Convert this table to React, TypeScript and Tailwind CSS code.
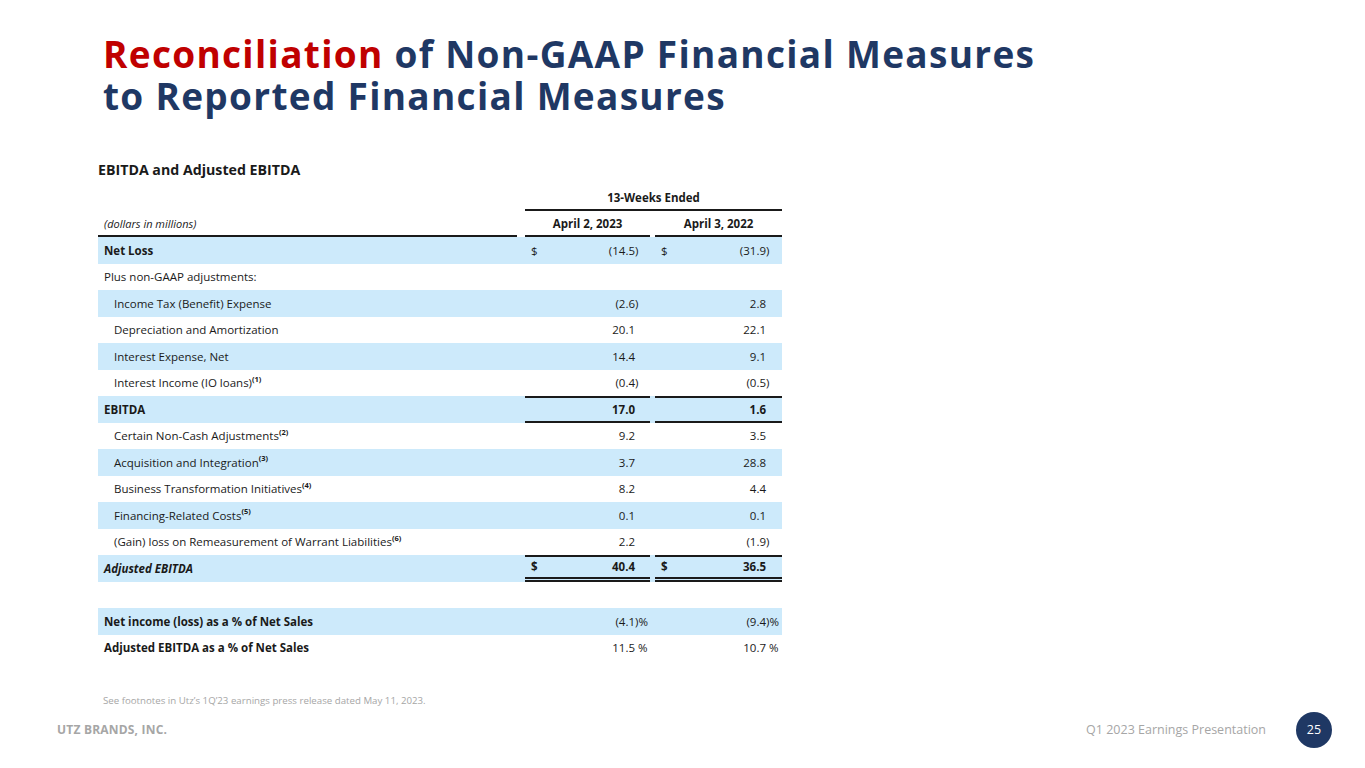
import React from 'react';

type Row = {
  label: string;
  sup?: string;
  indent?: boolean;
  bold?: boolean;
  italic?: boolean;
  band?: boolean;
  dollar?: boolean;
  a?: string;
  aSuf?: string;
  b?: string;
  bSuf?: string;
  valBold?: boolean;
  topLine?: boolean;
  bottomLine?: 'single' | 'double';
};

const rows: Row[] = [
  { label: 'Net Loss', bold: true, band: true, dollar: true, a: '(14.5', aSuf: ')', b: '(31.9', bSuf: ')' },
  { label: 'Plus non-GAAP adjustments:' },
  { label: 'Income Tax (Benefit) Expense', indent: true, band: true, a: '(2.6', aSuf: ')', b: '2.8' },
  { label: 'Depreciation and Amortization', indent: true, a: '20.1', b: '22.1' },
  { label: 'Interest Expense, Net', indent: true, band: true, a: '14.4', b: '9.1' },
  { label: 'Interest Income (IO loans)', sup: '(1)', indent: true, a: '(0.4', aSuf: ')', b: '(0.5', bSuf: ')' },
  { label: 'EBITDA', bold: true, band: true, a: '17.0', b: '1.6', valBold: true, topLine: true, bottomLine: 'single' },
  { label: 'Certain Non-Cash Adjustments', sup: '(2)', indent: true, a: '9.2', b: '3.5' },
  { label: 'Acquisition and Integration', sup: '(3)', indent: true, band: true, a: '3.7', b: '28.8' },
  { label: 'Business Transformation Initiatives', sup: '(4)', indent: true, a: '8.2', b: '4.4' },
  { label: 'Financing-Related Costs', sup: '(5)', indent: true, band: true, a: '0.1', b: '0.1' },
  { label: '(Gain) loss on Remeasurement of Warrant Liabilities', sup: '(6)', indent: true, a: '2.2', b: '(1.9', bSuf: ')' },
  { label: 'Adjusted EBITDA', bold: true, italic: true, band: true, dollar: true, a: '40.4', b: '36.5', valBold: true, topLine: true, bottomLine: 'double' },
  { label: '' },
  { label: 'Net income (loss) as a % of Net Sales', bold: true, band: true, a: '(4.1', aSuf: ')%', b: '(9.4', bSuf: ')%' },
  { label: 'Adjusted EBITDA as a % of Net Sales', bold: true, a: '11.5', aSuf: '\u00a0%', b: '10.7', bSuf: '\u00a0%' },
];

const ValueCell: React.FC<{ row: Row; val?: string; suf?: string; width: string; pr: string }> = ({ row, val, suf, width, pr }) => {
  const lines = [
    row.topLine ? 'border-t-2 border-[#1a1a1a]' : '',
    row.bottomLine === 'single' ? 'border-b-2 border-[#1a1a1a]' : '',
    row.bottomLine === 'double' ? 'border-b-[5px] border-double border-[#1a1a1a] -mb-[5px]' : '',
  ].join(' ');
  return (
    <div className={`${width} ${pr} h-full flex items-center pl-[6px] ${lines} ${row.valBold ? 'font-bold' : ''}`}>
      <span className="flex-1">{row.dollar ? '$' : ''}</span>
      <span>{val}</span>
      <span className="w-[14px] text-left whitespace-pre">{suf ?? ''}</span>
    </div>
  );
};

const App: React.FC = () => {
  return (
    <div className="w-[1365px] h-[768px] bg-white flex flex-col relative overflow-hidden" style={{ fontFamily: '"Open Sans", sans-serif' }}>
      <h1 className="pl-[103px] pt-[33px] text-[37px] leading-[42px] tracking-[1.3px] font-bold text-[#1f3864]">
        <span className="text-[#c00000]">Reconciliation</span> of Non-GAAP Financial Measures
        <br />
        to Reported Financial Measures
      </h1>

      <div className="ml-[98px] w-[684px] mt-[43px] text-[#1a1a1a] text-[11.5px]">
        <div className="h-[20px] flex items-center text-[14.2px] font-bold">EBITDA and Adjusted EBITDA</div>

        <div className="mt-[7px] h-[24px] flex">
          <div className="flex-1" />
          <div className="w-[257px] flex items-center justify-center font-bold border-b-2 border-[#1a1a1a]">13-Weeks Ended</div>
        </div>

        <div className="h-[26px] flex">
          <div className="w-[419px] flex items-center pl-[6px] pt-[2px] text-[11px] italic border-b-2 border-[#1a1a1a]">(dollars in millions)</div>
          <div className="w-[8px]" />
          <div className="w-[125px] flex items-center justify-center pt-[2px] font-bold border-b-2 border-[#1a1a1a]">April 2, 2023</div>
          <div className="w-[5px]" />
          <div className="w-[127px] flex items-center justify-center pt-[2px] font-bold border-b-2 border-[#1a1a1a]">April 3, 2022</div>
        </div>

        {rows.map((row, i) => (
          <div key={i} className={`h-[26.5px] flex ${row.band ? 'bg-[#cdeafb]' : ''}`}>
            <div
              className={`w-[419px] flex items-center ${row.indent ? 'pl-[16px]' : 'pl-[6px]'} ${row.bold ? 'font-bold' : ''} ${row.italic ? 'italic' : ''}`}
            >
              {row.label}
              {row.sup && <sup className="text-[7.5px] font-bold -top-[4px]">{row.sup}</sup>}
            </div>
            <div className="w-[8px]" />
            {row.a !== undefined ? (
              <>
                <ValueCell row={row} val={row.a} suf={row.aSuf} width="w-[125px]" pr="pr-[1px]" />
                <div className="w-[5px]" />
                <ValueCell row={row} val={row.b} suf={row.bSuf} width="w-[127px]" pr="pr-[2px]" />
              </>
            ) : null}
          </div>
        ))}
      </div>

      <p className="pl-[103px] mt-[33px] text-[9.7px] text-[#a6a6a6]">
        See footnotes in Utz’s 1Q’23 earnings press release dated May 11, 2023.
      </p>

      <div className="mt-auto mb-[20px] flex items-center h-[36px]">
        <div className="pl-[57px] text-[12px] font-bold text-[#a6a6a6] tracking-[0.2px]">UTZ BRANDS, INC.</div>
        <div className="flex-1" />
        <div className="text-[12.5px] text-[#a6a6a6]">Q1 2023 Earnings Presentation</div>
        <div className="ml-[30px] mr-[33px] w-[36px] h-[36px] rounded-full bg-[#1f3864] text-white text-[12.5px] flex items-center justify-center">
          25
        </div>
      </div>
    </div>
  );
};

export default App;
